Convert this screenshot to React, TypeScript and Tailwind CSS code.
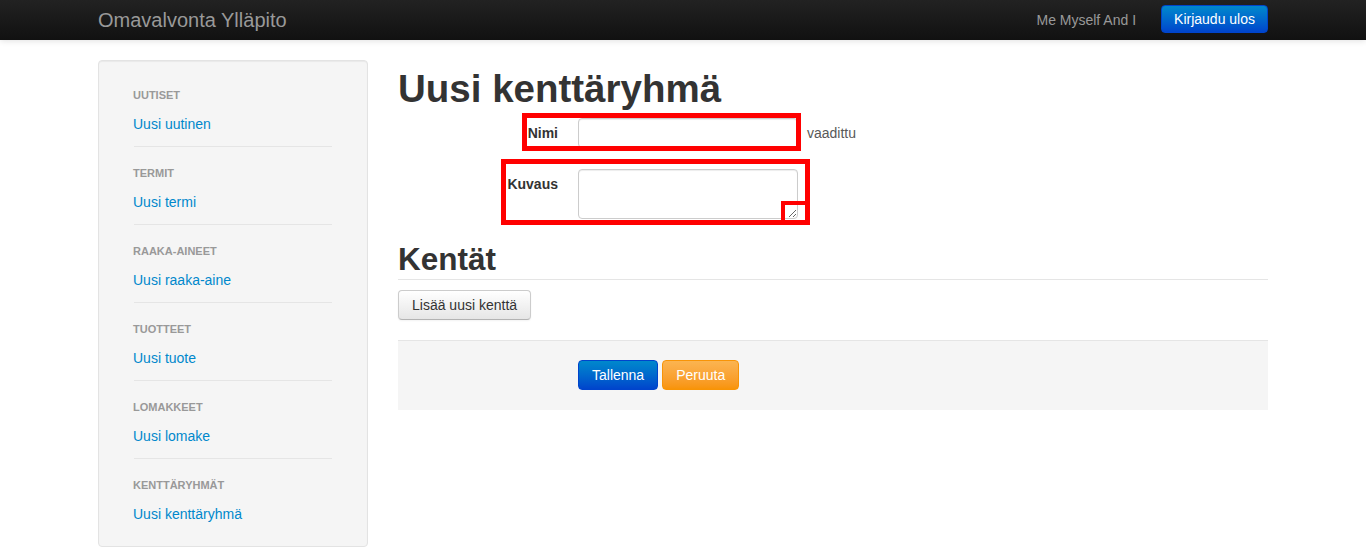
import React from 'react';

const sections = [
  { header: 'Uutiset', link: 'Uusi uutinen' },
  { header: 'Termit', link: 'Uusi termi' },
  { header: 'Raaka-aineet', link: 'Uusi raaka-aine' },
  { header: 'Tuotteet', link: 'Uusi tuote' },
  { header: 'Lomakkeet', link: 'Uusi lomake' },
  { header: 'Kenttäryhmät', link: 'Uusi kenttäryhmä' },
];

const App: React.FC = () => {
  return (
    <div className="min-h-[554px] bg-white font-['Liberation_Sans',Arial,sans-serif] text-sm text-[#333]">
      {/* Navbar */}
      <div className="h-10 bg-linear-to-b from-[#222] to-[#111] shadow-[0_1px_6px_rgba(0,0,0,0.12)]">
        <div className="mx-auto flex h-10 w-[1170px] items-start">
          <a className="py-[10px] text-[20px] leading-5 text-[#999]">Omavalvonta Ylläpito</a>
          <span className="ml-auto mr-[25px] py-[10px] leading-5 text-[#999]">Me Myself And I</span>
          <button className="mt-[5px] h-[28px] rounded-[4px] border border-[#0044cc] bg-linear-to-b from-[#0088cc] to-[#0044cc] px-3 leading-5 text-white">
            Kirjaudu ulos
          </button>
        </div>
      </div>

      <div className="mx-auto mt-5 flex w-[1170px] items-start gap-[30px]">
        {/* Sidebar */}
        <div className="w-[270px] rounded-[4px] border border-[#e3e3e3] bg-[#f5f5f5] px-[34px] pt-6 pb-[22px] shadow-[inset_0_1px_1px_rgba(0,0,0,0.05)]">
          {sections.map((s, i) => (
            <div key={s.header}>
              {i > 0 && <div className="mx-px mt-3 mb-4 h-px bg-[#e5e5e5]" />}
              <div className="text-[11px] font-bold uppercase leading-5 text-[#999]">{s.header}</div>
              <a className="mt-[9px] block leading-5 text-[#0088cc]">{s.link}</a>
            </div>
          ))}
        </div>

        {/* Main */}
        <div className="w-[870px]">
          <h1 className="mt-[9px] text-[38.5px] font-bold leading-[40px] text-[#333]">Uusi kenttäryhmä</h1>

          <div className="mt-[9px]">
            <div className="relative flex">
              <label className="w-[160px] pt-[5px] text-right font-bold leading-5">Nimi</label>
              <div className="ml-5 flex">
                <input className="h-[30px] w-[220px] rounded-[4px] border border-[#ccc] px-[6px] shadow-[inset_0_1px_1px_rgba(0,0,0,0.075)] outline-none" />
                <span className="ml-1 pl-[5px] leading-[30px] text-[#595959]">vaadittu</span>
              </div>
              <div className="pointer-events-none absolute left-[124px] top-[-5px] h-[38px] w-[279px] border-[5px] border-[#ff0000]" />
            </div>

            <div className="relative mt-[21px] flex">
              <label className="w-[160px] pt-[5px] text-right font-bold leading-5">Kuvaus</label>
              <div className="ml-5">
                <textarea className="block h-[50px] w-[220px] rounded-[4px] border border-[#ccc] px-[6px] py-1 shadow-[inset_0_1px_1px_rgba(0,0,0,0.075)] outline-none" />
              </div>
              <div className="pointer-events-none absolute left-[103px] top-[-10px] h-[66px] w-[309px] border-[5px] border-[#ff0000]" />
              <div className="pointer-events-none absolute left-[383px] top-[32px] h-[24px] w-[29px] border-4 border-[#ff0000]" />
            </div>
          </div>

          <div className="mt-5 border-b border-[#e5e5e5]">
            <h2 className="text-[31.5px] font-bold leading-[40px] text-[#333]">Kentät</h2>
          </div>

          <button className="mt-[10px] h-[30px] rounded-[4px] border border-[#ccc] border-b-[#b3b3b3] bg-linear-to-b from-white to-[#e6e6e6] px-[13px] leading-5 text-[#333] shadow-[inset_0_1px_0_rgba(255,255,255,0.2),0_1px_2px_rgba(0,0,0,0.05)]">
            Lisää uusi kenttä
          </button>

          <div className="mt-5 flex gap-1 border-t border-[#e5e5e5] bg-[#f5f5f5] pt-[19px] pb-5 pl-[180px]">
            <button className="h-[30px] rounded-[4px] border border-[#0044cc] bg-linear-to-b from-[#0088cc] to-[#0044cc] px-[13px] leading-5 text-white">
              Tallenna
            </button>
            <button className="h-[30px] rounded-[4px] border border-[#f89406] bg-linear-to-b from-[#fbb450] to-[#f89406] px-[13px] leading-5 text-white">
              Peruuta
            </button>
          </div>
        </div>
      </div>
    </div>
  );
};

export default App;
